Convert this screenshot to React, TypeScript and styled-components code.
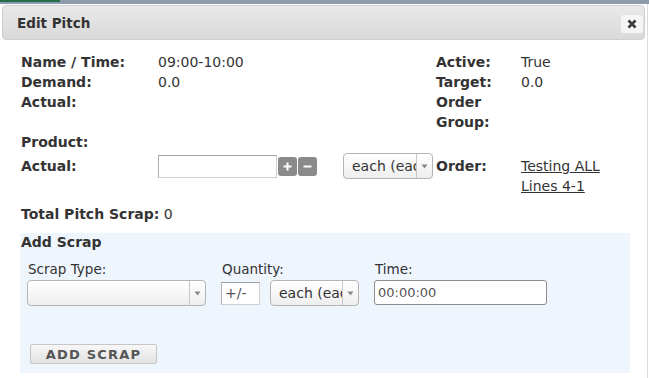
import React from "react";
import styled, { createGlobalStyle } from "styled-components";

const Global = createGlobalStyle`
  html, body { margin: 0; padding: 0; background: #fff; }
  body { font-family: "DejaVu Sans", Verdana, sans-serif; font-size: 14px; color: #333; }
`;

const Page = styled.div`
  width: 649px;
  height: 378px;
  overflow: hidden;
  background: #fff;
`;

const TopStrip = styled.div`
  height: 4px;
  background: #8b9bab;
  display: flex;
  align-items: flex-start;
`;

const GreenMark = styled.div`
  width: 60px;
  height: 2px;
  background: #236e47;
`;

const Dialog = styled.div`
  width: 643px;
  height: 374px;
  padding: 1px 2px 0 2px;
  border-right: 1px solid #dcdcdc;
  box-sizing: content-box;
`;

const TitleBar = styled.div`
  height: 33px;
  border: 1px solid #cfcfcf;
  border-radius: 4px;
  background: linear-gradient(#e9e9e9, #d9d9d9);
  display: flex;
  align-items: center;
  justify-content: space-between;
  padding: 0 1px 0 14px;
`;

const Title = styled.span`
  font-family: "DejaVu Sans", Verdana, sans-serif;
  font-weight: 700;
  font-size: 13.5px;
  color: #333;
`;

const CloseButton = styled.button`
  width: 22px;
  height: 18px;
  margin-top: 2px;
  border: none;
  border-radius: 3px;
  background: #f5f5f5;
  display: flex;
  align-items: center;
  justify-content: center;
  padding: 0;
`;

const Content = styled.div`
  padding: 12px 0 0 19px;
`;

const InfoGrid = styled.div`
  display: grid;
  grid-template-columns: 137px 278px 85px 1fr;
  line-height: 20px;
`;

const Label = styled.div<{ $pad?: number }>`
  font-weight: 700;
  padding-top: ${(p) => p.$pad ?? 0}px;
`;

const Value = styled.div<{ $pad?: number }>`
  padding-top: ${(p) => p.$pad ?? 0}px;
`;

const Controls = styled.div`
  display: flex;
  align-items: center;
  height: 26px;
  margin-top: 1px;
`;

const TextInput = styled.input<{ $w: number; $h: number }>`
  width: ${(p) => p.$w}px;
  height: ${(p) => p.$h}px;
  box-sizing: border-box;
  border: 1px solid #cfcfcf;
  border-top-color: #a0a0a0;
  border-left-color: #b0b0b0;
  font-family: "DejaVu Sans", Verdana, sans-serif;
  font-size: 13px;
  color: #555;
  padding: 0 3px;
  background: #fff;
  &::placeholder { color: #555; font-size: 14px; }
`;

const RoundInput = styled(TextInput)`
  border: 1px solid #8c8c8c;
  border-radius: 3px;
`;

const StepButton = styled.span`
  width: 19px;
  height: 19px;
  background: #8a8a8a;
  border-radius: 3px;
  margin-left: 1px;
  display: flex;
  align-items: center;
  justify-content: center;
`;

const SelectBox = styled.div<{ $w: number; $ml?: number }>`
  width: ${(p) => p.$w}px;
  height: 26px;
  margin-left: ${(p) => p.$ml ?? 0}px;
  box-sizing: border-box;
  border: 1px solid #b4b4b4;
  border-radius: 4px;
  background: linear-gradient(#ffffff, #eeeeee);
  display: flex;
  align-items: stretch;
  overflow: hidden;
`;

const SelectText = styled.span`
  flex: 1;
  overflow: hidden;
  white-space: nowrap;
  padding-left: 8px;
  line-height: 24px;
  color: #333;
`;

const SelectArrow = styled.span`
  width: 15px;
  border-left: 1px solid #c8c8c8;
  display: flex;
  align-items: center;
  justify-content: center;
`;

const OrderLink = styled.a`
  color: #333;
  text-decoration: underline;
  display: block;
  padding-top: 4px;
  width: 100px;
`;

const TotalRow = styled.div`
  margin-top: 8px;
  line-height: 20px;
`;

const Strong = styled.span`
  font-weight: 700;
`;

const ScrapPanel = styled.div`
  margin: 9px 0 0 -1px;
  width: 609px;
  height: 140px;
  padding-left: 1px;
  background: #eff5fd;
  display: flex;
  flex-direction: column;
`;

const PanelTitle = styled.div`
  font-weight: 700;
  line-height: 18px;
`;

const FieldRow = styled.div`
  display: flex;
  gap: 15px;
  margin-top: 9px;
  padding-left: 6px;
`;

const Field = styled.div`
  display: flex;
  flex-direction: column;
`;

const FieldLabel = styled.div`
  line-height: 18px;
  padding-left: 1px;
  margin-bottom: 2px;
  font-size: 13.5px;
`;

const FieldControls = styled.div`
  display: flex;
  align-items: center;
  gap: 10px;
`;

const AddButton = styled.button`
  margin: 38px 0 0 9px;
  width: 127px;
  height: 20px;
  border: 1px solid #c6c6c6;
  border-radius: 2px;
  background: linear-gradient(#f7f7f7, #e2e2e2);
  font-family: "DejaVu Sans", Verdana, sans-serif;
  font-weight: 700;
  font-size: 13px;
  letter-spacing: 1.2px;
  color: #555;
  padding: 0;
`;

const Arrow = () => (
  <svg width="7" height="5" viewBox="0 0 7 5">
    <path d="M0.5 0.5 L6.5 0.5 L3.5 4.5 Z" fill="#888" />
  </svg>
);

const Select = ({ w, ml, text }: { w: number; ml?: number; text: string }) => (
  <SelectBox $w={w} $ml={ml}>
    <SelectText>{text}</SelectText>
    <SelectArrow>
      <Arrow />
    </SelectArrow>
  </SelectBox>
);

export default function App() {
  return (
    <Page>
      <Global />
      <TopStrip>
        <GreenMark />
      </TopStrip>
      <Dialog>
        <TitleBar>
          <Title>Edit Pitch</Title>
          <CloseButton aria-label="close">
            <svg width="10" height="10" viewBox="0 0 10 10">
              <path d="M1.5 1.5 L8.5 8.5 M8.5 1.5 L1.5 8.5" stroke="#3a3a3a" strokeWidth="2.6" />
            </svg>
          </CloseButton>
        </TitleBar>
        <Content>
          <InfoGrid>
            <Label>Name / Time:</Label>
            <Value>09:00-10:00</Value>
            <Label>Active:</Label>
            <Value>True</Value>

            <Label>Demand:</Label>
            <Value>0.0</Value>
            <Label>Target:</Label>
            <Value>0.0</Value>

            <Label>Actual:</Label>
            <Value />
            <Label>Order Group:</Label>
            <Value />

            <Label>Product:</Label>
            <Value />
            <Value />
            <Value />

            <Label $pad={4}>Actual:</Label>
            <Controls>
              <TextInput $w={119} $h={23} />
              <StepButton>
                <svg width="9" height="9" viewBox="0 0 9 9">
                  <path d="M4.5 0.5 V8.5 M0.5 4.5 H8.5" stroke="#fff" strokeWidth="2" />
                </svg>
              </StepButton>
              <StepButton>
                <svg width="9" height="9" viewBox="0 0 9 9">
                  <path d="M0.5 4.5 H8.5" stroke="#fff" strokeWidth="2" />
                </svg>
              </StepButton>
              <Select w={90} ml={26} text="each (each)" />
            </Controls>
            <Label $pad={4}>Order:</Label>
            <Value>
              <OrderLink href="#">Testing ALL Lines 4-1</OrderLink>
            </Value>
          </InfoGrid>
          <TotalRow>
            <Strong>Total Pitch Scrap:</Strong> 0
          </TotalRow>
          <ScrapPanel>
            <PanelTitle>Add Scrap</PanelTitle>
            <FieldRow>
              <Field>
                <FieldLabel>Scrap Type:</FieldLabel>
                <FieldControls>
                  <Select w={179} text="" />
                </FieldControls>
              </Field>
              <Field>
                <FieldLabel>Quantity:</FieldLabel>
                <FieldControls>
                  <TextInput $w={39} $h={23} placeholder="+/-" />
                  <Select w={89} text="each (each)" />
                </FieldControls>
              </Field>
              <Field>
                <FieldLabel>Time:</FieldLabel>
                <FieldControls>
                  <RoundInput $w={173} $h={25} defaultValue="00:00:00" />
                </FieldControls>
              </Field>
            </FieldRow>
            <div>
              <AddButton>ADD SCRAP</AddButton>
            </div>
          </ScrapPanel>
        </Content>
      </Dialog>
    </Page>
  );
}
